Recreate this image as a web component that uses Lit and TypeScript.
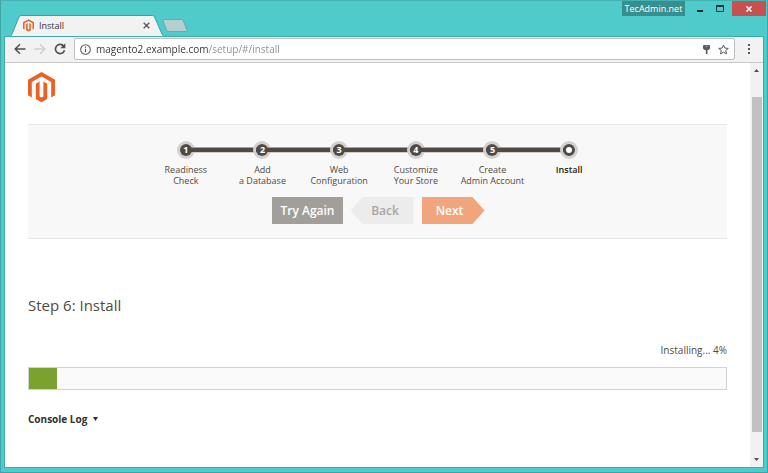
import { LitElement, html, css, svg } from "lit";
import { customElement, property, state } from "lit/decorators.js";
import { classMap } from "lit/directives/class-map.js";

interface Step {
  lines: string[];
}

const STEPS: Step[] = [
  { lines: ["Readiness", "Check"] },
  { lines: ["Add", "a Database"] },
  { lines: ["Web", "Configuration"] },
  { lines: ["Customize", "Your Store"] },
  { lines: ["Create", "Admin Account"] },
  { lines: ["Install"] },
];

const magentoShape = svg`
  <path fill="#ea6025" d="M13.5 0 L27 7.8 V23.2 L23.2 25.4 V10 L13.5 4.4 L3.8 10 V25.4 L0 23.2 V7.8 Z"/>
  <path fill="#ea6025" d="M11.6 9.6 V24.4 L13.5 25.6 L15.4 24.4 V9.6 L19.2 11.8 V26.9 L13.5 30.2 L7.8 26.9 V11.8 Z"/>`;

@customElement("magento-logo")
export class MagentoLogo extends LitElement {
  static styles = css`
    :host { display: block; }
    .mark { display: block; width: 100%; height: 100%; }
  `;
  render() {
    return html`<svg class="mark" viewBox="0 0 27 31" aria-hidden="true">${magentoShape}</svg>`;
  }
}

@customElement("setup-steps")
export class SetupSteps extends LitElement {
  static styles = css`
    .steps {
      display: grid;
      grid-template-columns: repeat(6, minmax(0, 1fr));
      max-width: 460px;
      margin: 0 auto;
      padding: 0;
      list-style: none;
    }
    .step {
      position: relative;
      display: flex;
      flex-direction: column;
      align-items: center;
      gap: 4px;
      color: #514943;
      font-size: 9px;
      font-weight: 500;
      line-height: 11px;
      text-align: center;
    }
    .step:not(:first-child)::before {
      content: "";
      position: absolute;
      top: 7px;
      right: 50%;
      width: 100%;
      height: 4px;
      background: #514943;
      border-top: 1px solid #a5a29f;
      border-bottom: 1px solid #cfcecd;
    }
    .dot {
      position: relative;
      z-index: 1;
      box-sizing: border-box;
      width: 12px;
      height: 12px;
      margin: 4px;
      border-radius: 50%;
      background: #514943;
      color: #fff;
      font-size: 9px;
      font-weight: 700;
      line-height: 12px;
    }
    .step::after {
      content: "";
      position: absolute;
      top: 1px;
      left: 50%;
      width: 12px;
      height: 12px;
      margin-left: -9px;
      border: 3px solid #d2d1d0;
      border-radius: 50%;
    }
    .current { color: #1f1b18; font-weight: 600; }
    .current .dot { border: 3px solid #514943; background: #fff; }
    .label { white-space: nowrap; }
    .line { display: block; height: 11px; }
  `;

  render() {
    const last = STEPS.length - 1;
    return html`<ol class="steps">
      ${STEPS.map(
        (s, i) => html`<li class=${classMap({ step: true, current: i === last })}>
          <span class="dot">${i === last ? "" : i + 1}</span>
          <span class="label">${s.lines.map((l) => html`<span class="line">${l}</span>`)}</span>
        </li>`
      )}
    </ol>`;
  }
}

@customElement("install-page")
export class InstallPage extends LitElement {
  @property({ type: Number }) progress = 4;

  static styles = css`
    :host {
      display: block;
      flex: 1;
      min-width: 0;
      padding: 9px 23px 0;
      background: #fff;
      color: #514943;
      font: 10px/16px "Open Sans", sans-serif;
    }
    .logo { width: 27px; height: 31px; }
    .wizard {
      margin-top: 21px;
      padding: 15px 0 14px;
      background: #f8f8f8;
      border-top: 1px solid #e6e6e6;
      border-bottom: 1px solid #e6e6e6;
    }
    .actions {
      display: flex;
      justify-content: center;
      gap: 8px;
      margin-top: 11px;
      padding-left: 2px;
    }
    .btn {
      height: 27px;
      padding: 0 8px;
      border: 0;
      background: #a29f9b;
      color: #fff;
      font: 600 12px/27px "Open Sans", sans-serif;
    }
    .back, .next { width: 63px; }
    .back {
      padding: 0 0 0 6px;
      background: #ececec;
      color: #a8a6a4;
      clip-path: polygon(0 50%, 12px 0, 100% 0, 100% 100%, 12px 100%);
    }
    .next {
      padding: 0 7px 0 0;
      background: #f1a57d;
      clip-path: polygon(0 0, 51px 0, 100% 50%, 51px 100%, 0 100%);
    }
    .title {
      margin: 55px 0 0;
      font-size: 15px;
      font-weight: 400;
      line-height: 22px;
    }
    .status { margin-top: 26px; text-align: right; }
    .bar {
      height: 21px;
      margin-top: 9px;
      border: 1px solid #d2d2d2;
      background: #fafafa;
    }
    .fill { height: 100%; background: #79a22e; }
    .log {
      display: flex;
      align-items: center;
      gap: 6px;
      margin-top: 21px;
      padding: 0;
      border: 0;
      background: none;
      color: #303030;
      font: 700 10px/16px "Open Sans", sans-serif;
    }
    .caret { width: 5px; height: 4px; }
  `;

  render() {
    return html`
      <magento-logo class="logo"></magento-logo>
      <section class="wizard">
        <setup-steps></setup-steps>
        <div class="actions">
          <button class="btn" type="button">Try Again</button>
          <button class="btn back" type="button">Back</button>
          <button class="btn next" type="button">Next</button>
        </div>
      </section>
      <h1 class="title">Step 6: Install</h1>
      <div class="status">Installing... ${this.progress}%</div>
      <div class="bar" role="progressbar" aria-label="Installing" aria-valuenow=${this.progress}>
        <div class="fill" style="width:${this.progress}%"></div>
      </div>
      <button class="log" type="button">
        Console Log
        <svg class="caret" viewBox="0 0 5 4" aria-hidden="true"><path fill="#303030" d="M0 0H5L2.5 4Z" /></svg>
      </button>
    `;
  }
}

@customElement("app-root")
export class AppRoot extends LitElement {
  @state() private url = "magento2.example.com/setup/#/install";

  static styles = css`
    :host {
      display: flex;
      flex-direction: column;
      box-sizing: border-box;
      min-height: 100vh;
      padding: 0 4px 4px;
      border: 1px solid #3ea5a4;
      border-top-color: #43b3b1;
      background: #4ecbca;
      font: 10px/14px "Open Sans", sans-serif;
    }
    button { padding: 0; border: 0; background: none; }
    svg { display: block; }
    .titlebar {
      display: flex;
      align-items: flex-start;
      justify-content: space-between;
      height: 35px;
    }
    .tabs { display: flex; align-items: flex-end; height: 35px; padding-left: 5px; }
    .tab {
      display: grid;
      width: 154px;
      height: 21px;
    }
    .tab-shape, .tab-body { grid-area: 1 / 1; }
    .tab-body {
      display: flex;
      align-items: center;
      gap: 5px;
      padding: 0 14px 0 13px;
      color: #333;
      font-size: 9px;
    }
    .favicon { width: 11px; height: 13px; }
    .tab-title { flex: 1; }
    .new-tab { align-self: flex-start; margin: 18px 0 0 -2px; }
    .controls { display: flex; margin-right: -3px; }
    .badge {
      width: 63px;
      height: 15px;
      margin-right: 5px;
      background: #368f8e;
      color: #fff;
      font: 500 9px/13px "Open Sans", sans-serif;
      text-align: center;
    }
    .ctl { display: grid; place-items: center; width: 20px; height: 15px; }
    .close { width: 34px; margin-left: 2px; background: #c75050; }
    .frame {
      display: flex;
      flex: 1;
      flex-direction: column;
      outline: 1px solid #3fa9a8;
      outline-offset: -1px;
      border: 1px solid transparent;
      border-top: 0;
      margin: 0 -1px;
    }
    .toolbar {
      display: flex;
      align-items: center;
      gap: 8px;
      height: 26px;
      padding: 0 12px 0 9px;
      border-bottom: 1px solid #c8c8c8;
      background: #f2f2f2;
    }
    .omnibox {
      display: flex;
      flex: 1;
      align-items: center;
      gap: 5px;
      box-sizing: border-box;
      height: 22px;
      margin-right: 4px;
      padding: 0 5px;
      border: 1px solid #bdbdbd;
      border-radius: 2px;
      background: #fff;
    }
    .url {
      flex: 1;
      min-width: 0;
      padding: 0;
      border: 0;
      outline: 0;
      background: linear-gradient(90deg, #333 112px, #8c8c8c 112px);
      -webkit-background-clip: text;
      background-clip: text;
      color: transparent;
      font: 10px/16px "Open Sans", sans-serif;
    }
    .bookmark { padding-left: 3px; }
    .viewport { display: flex; flex: 1; }
    .scroll {
      display: flex;
      flex-direction: column;
      align-items: center;
      box-sizing: border-box;
      width: 13px;
      padding: 5px 0 5px;
      background: #f1f1f1;
    }
    .thumb { flex: 1; width: 10px; margin: 25px 0 26px; background: #c1c1c1; }
  `;

  render() {
    return html`
      <header class="titlebar">
        <div class="tabs">
          <div class="tab">
            <svg class="tab-shape" width="154" height="21" viewBox="0 0 154 21" aria-hidden="true">
              <path fill="#f2f2f2" stroke="#3f9f9e" d="M0 21.5 L2 19 L9 2 Q9.500 .5 11 .5 H142.500 Q144 .5 144.500 2 L152 19 L154 21.500" />
            </svg>
            <div class="tab-body">
              <magento-logo class="favicon"></magento-logo>
              <span class="tab-title">Install</span>
              <button type="button" aria-label="Close tab">
                <svg width="7" height="7" viewBox="0 0 7 7"><path d="M.7.7 6.300 6.300M6.300.7.7 6.300" stroke="#5a5a5a" stroke-width="1.400" /></svg>
              </button>
            </div>
          </div>
          <button class="new-tab" type="button" aria-label="New tab">
            <svg width="26" height="14" viewBox="0 0 26 14"><path d="M2 .5H19.500Q21 .5 21.500 2L25 11.500Q25.300 12.500 24 12.500H6.500Q5 12.500 4.500 11L1 2Q.6.500 2 .500Z" fill="#b3cfcf" stroke="#68aaaa" /></svg>
          </button>
        </div>
        <div class="controls">
          <button class="badge" type="button">TecAdmin.net</button>
          <button class="ctl" type="button" aria-label="Minimize">
            <svg width="6" height="9" viewBox="0 0 6 9"><path d="M0 6H6V8H0Z" fill="#1e2b2b" /></svg>
          </button>
          <button class="ctl" type="button" aria-label="Maximize">
            <svg width="8" height="7" viewBox="0 0 8 7"><path d="M.5 1H7.500V6.500H.5Z" fill="none" stroke="#243a3a" /><path d="M0 0H8V2H0Z" fill="#243a3a" /></svg>
          </button>
          <button class="ctl close" type="button" aria-label="Close">
            <svg width="6" height="6" viewBox="0 0 6 6"><path d="M.5.5 5.500 5.500M5.500.5.5 5.500" stroke="#fff" stroke-width="1.500" /></svg>
          </button>
        </div>
      </header>
      <div class="frame">
        <nav class="toolbar">
          <button type="button" aria-label="Back">
            <svg width="12" height="12" viewBox="0 0 12 12"><path d="M11.500 6H1.500M6 1.200 1.200 6 6 10.800" fill="none" stroke="#505050" stroke-width="1.500" /></svg>
          </button>
          <button type="button" aria-label="Forward">
            <svg width="12" height="12" viewBox="0 0 12 12"><path d="M.5 6H10.500M6 1.200 10.800 6 6 10.800" fill="none" stroke="#cfcfcf" stroke-width="1.500" /></svg>
          </button>
          <button type="button" aria-label="Reload">
            <svg width="12" height="12" viewBox="0 0 12 12"><path d="M9.800 3.300A4.600 4.600 0 1 0 10.500 7.200" fill="none" stroke="#505050" stroke-width="1.600" /><path d="M11.300.3V5.300H6.300Z" fill="#505050" /></svg>
          </button>
          <div class="omnibox">
            <svg width="11" height="11" viewBox="0 0 11 11" aria-hidden="true"><circle cx="5.500" cy="5.500" r="4.800" fill="none" stroke="#5a5a5a" stroke-width="1.100" /><path d="M5.500 4.800V8.300M5.500 2.600V3.800" stroke="#5a5a5a" stroke-width="1.200" /></svg>
            <input class="url" type="text" aria-label="Address" .value=${this.url} />
            <svg width="7" height="9" viewBox="0 0 7 9" aria-hidden="true"><path d="M1 0H6Q7 0 7 1V3Q7 4.500 5.200 5H4.500V9H2.800V5H1.800Q0 4.500 0 3V1Q0 0 1 0Z" fill="#5c5c5c" /><path d="M2.500 1.300H4.500" stroke="#bbb" stroke-width=".8" /></svg>
            <button class="bookmark" type="button" aria-label="Bookmark">
              <svg width="11" height="11" viewBox="0 0 11 11"><path d="M5.500 1 6.900 4.100 10.300 4.400 7.700 6.600 8.500 9.900 5.500 8.200 2.500 9.900 3.300 6.600 .7 4.400 4.100 4.100Z" fill="none" stroke="#5a5a5a" /></svg>
            </button>
          </div>
          <button type="button" aria-label="Menu">
            <svg width="4" height="11" viewBox="0 0 4 11"><path d="M1 0H3V2H1ZM1 4H3V6H1ZM1 8H3V10H1Z" fill="#5a5a5a" /></svg>
          </button>
        </nav>
        <div class="viewport">
          <install-page></install-page>
          <div class="scroll" aria-hidden="true">
            <svg width="5" height="4" viewBox="0 0 5 4"><path d="M0 4H5L2.500 1Z" fill="#505050" /></svg>
            <div class="thumb"></div>
            <svg width="5" height="4" viewBox="0 0 5 4"><path d="M0 0H5L2.500 3Z" fill="#505050" /></svg>
          </div>
        </div>
      </div>
    `;
  }
}
